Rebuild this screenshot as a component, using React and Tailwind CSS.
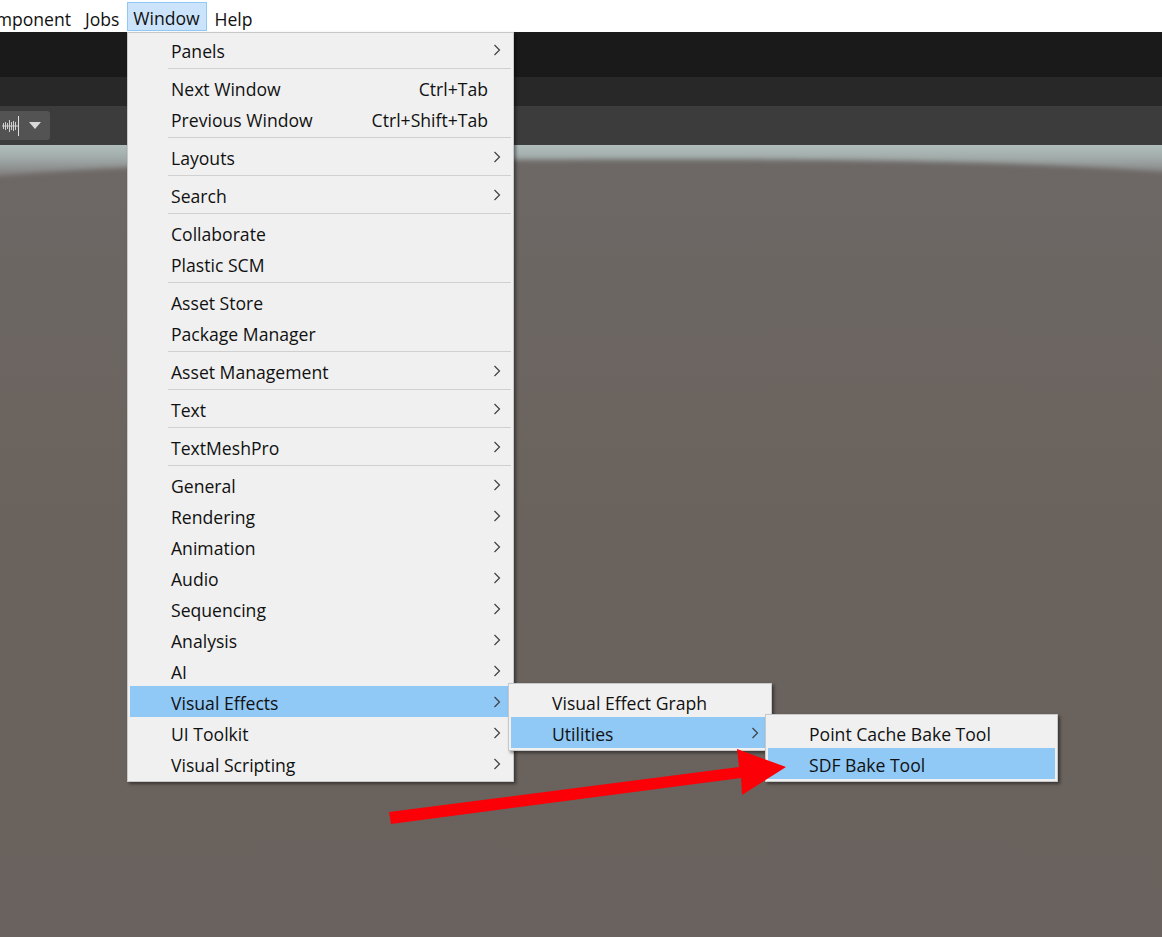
import React from "react";

const menuItems = [
  { label: "Panels", sub: true },
  { sep: true },
  { label: "Next Window", shortcut: "Ctrl+Tab" },
  { label: "Previous Window", shortcut: "Ctrl+Shift+Tab" },
  { sep: true },
  { label: "Layouts", sub: true },
  { sep: true },
  { label: "Search", sub: true },
  { sep: true },
  { label: "Collaborate" },
  { label: "Plastic SCM" },
  { sep: true },
  { label: "Asset Store" },
  { label: "Package Manager" },
  { sep: true },
  { label: "Asset Management", sub: true },
  { sep: true },
  { label: "Text", sub: true },
  { sep: true },
  { label: "TextMeshPro", sub: true },
  { sep: true },
  { label: "General", sub: true },
  { label: "Rendering", sub: true },
  { label: "Animation", sub: true },
  { label: "Audio", sub: true },
  { label: "Sequencing", sub: true },
  { label: "Analysis", sub: true },
  { label: "AI", sub: true },
  { label: "Visual Effects", sub: true, active: true },
  { label: "UI Toolkit", sub: true },
  { label: "Visual Scripting", sub: true },
];

function Chevron() {
  return (
    <svg width="8" height="12" viewBox="0 0 8 12" fill="none" stroke="#404040" strokeWidth="1.2">
      <path d="M1.5 1L6.5 6L1.5 11" />
    </svg>
  );
}

function MenuRow({ label, shortcut, sub, active }) {
  return (
    <div
      className={`h-[31px] flex items-center justify-between pl-[41px] pr-[10px] text-[17.6px] leading-none text-[#111111] ${
        active ? "bg-[#90c8f6]" : ""
      }`}
    >
      <span className="pt-[4px]">{label}</span>
      {shortcut && <span className="pt-[4px] pr-[13px]">{shortcut}</span>}
      {sub && <Chevron />}
    </div>
  );
}

function Waveform() {
  return (
    <svg width="18" height="22" viewBox="0 0 18 22" fill="none" stroke="#cfcfcf" strokeWidth="1">
      <path d="M1.5 8v6M3.5 7v8M5.5 8v6M7.5 5v12M9.5 7v8M11.5 6v10M13.5 7v8" />
      <path d="M16.5 1v20" stroke="#e0e0e0" />
      <path d="M0 11h16" />
    </svg>
  );
}

export default function App() {
  return (
    <div
      className="relative w-[1162px] h-[937px] overflow-hidden flex flex-col bg-[#6a625c]"
      style={{ fontFamily: '"Open Sans", "Noto Sans", sans-serif' }}
    >
      {/* menu bar */}
      <div className="h-[32px] bg-white flex items-center text-[17.6px] leading-none text-[#111111] shrink-0">
        <span className="ml-[-26px] pt-[7px]">Component</span>
        <span className="ml-[14px] pt-[7px]">Jobs</span>
        <span className="ml-[7px] w-[80px] h-[29px] mt-[1px] flex items-center justify-center pt-[4px] bg-[#cce4fb] border border-[#90c8f6]">
          Window
        </span>
        <span className="ml-[8px] pt-[7px]">Help</span>
      </div>

      {/* editor bars */}
      <div className="h-[45px] bg-[#1a1a1a] shrink-0" />
      <div className="h-[29px] bg-[#282828] shrink-0" />
      <div className="h-[39px] bg-[#3c3c3c] shrink-0 flex items-center">
        <div className="w-[50px] h-[29px] bg-[#535353] rounded-r-[3px] flex items-center justify-end gap-[9px] pr-[9px]">
          <Waveform />
          <div className="w-0 h-0 border-l-[6px] border-r-[6px] border-t-[7px] border-l-transparent border-r-transparent border-t-[#d8d8d8]" />
        </div>
      </div>

      {/* scene view */}
      <div className="flex-1 bg-gradient-to-b from-[#6d6866] via-[#6a625c] to-[#6a625e] relative">
        <svg className="absolute left-0 top-0 w-full h-[50px]" viewBox="0 0 1162 50" preserveAspectRatio="none">
          <defs>
            <linearGradient id="horizon" x1="0" y1="0" x2="0" y2="1">
              <stop offset="0" stopColor="#bccbc9" />
              <stop offset="0.5" stopColor="#a3aeac" />
              <stop offset="1" stopColor="#7c7877" />
            </linearGradient>
            <filter id="soft" x="-5%" y="-30%" width="110%" height="160%">
              <feGaussianBlur stdDeviation="2.5" />
            </filter>
          </defs>
          <path d="M-20 -10H1182V28C1000 14 800 14 500 15C300 16 100 20 -20 33Z" fill="url(#horizon)" filter="url(#soft)" />
        </svg>
      </div>

      {/* window menu */}
      <div className="absolute left-[127px] top-[32px] w-[387px] h-[750px] bg-[#f0f0f0] border border-[#c8c8c8] px-[2px] py-[1px] shadow-[2px_2px_3px_rgba(0,0,0,0.45)]">
        {menuItems.map((item, i) =>
          item.sep ? (
            <div key={i} className="h-[7px] pt-[3px] pl-[38px]">
              <div className="h-px bg-[#d0d0d0]" />
            </div>
          ) : (
            <MenuRow key={i} {...item} />
          )
        )}
      </div>

      {/* visual effects submenu */}
      <div className="absolute left-[508px] top-[683px] w-[264px] h-[68px] bg-[#f0f0f0] border border-[#c8c8c8] p-[2px] shadow-[2px_2px_3px_rgba(0,0,0,0.45)]">
        <MenuRow label="Visual Effect Graph" />
        <MenuRow label="Utilities" sub active />
      </div>

      {/* utilities submenu */}
      <div className="absolute left-[765px] top-[714px] w-[293px] h-[68px] bg-[#f0f0f0] border border-[#c8c8c8] p-[2px] shadow-[2px_2px_3px_rgba(0,0,0,0.45)]">
        <MenuRow label="Point Cache Bake Tool" />
        <MenuRow label="SDF Bake Tool" active />
      </div>

      {/* red arrow */}
      <svg className="absolute left-0 top-0 pointer-events-none" width="1162" height="937">
        <polygon points="389,812 739,767 737,749 786,767 742,795 741,778 391,824" fill="#fb0007" />
      </svg>
    </div>
  );
}
